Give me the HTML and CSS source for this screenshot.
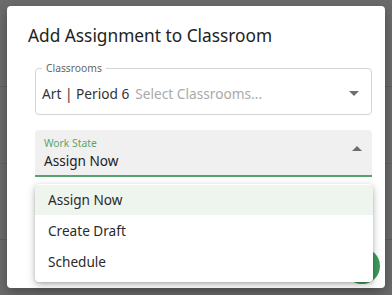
FILE: index.html
```html
<!DOCTYPE html>
<html lang="en">
<head>
    <meta charset="UTF-8">
    <meta name="viewport" content="width=device-width, initial-scale=1.0">
    <title>Add Assignment to Classroom</title>
    <link rel="stylesheet" href="styles.css">
</head>
<body>
    <div class="backdrop">
        <div class="dialog">
            <h1 class="dialog-title">Add Assignment to Classroom</h1>

            <div class="field outlined">
                <span class="outlined-label">Classrooms</span>
                <div class="field-row">
                    <span class="chip-text">Art | Period 6</span>
                    <span class="placeholder">Select Classrooms...</span>
                    <span class="arrow down"></span>
                </div>
            </div>

            <div class="field filled">
                <div class="field-col">
                    <span class="filled-label">Work State</span>
                    <span class="value">Assign Now</span>
                </div>
                <span class="arrow up"></span>
            </div>

            <div class="actions">
                <span class="fab"></span>
            </div>

            <ul class="menu">
                <li class="menu-item selected">Assign Now</li>
                <li class="menu-item">Create Draft</li>
                <li class="menu-item">Schedule</li>
            </ul>
        </div>
    </div>
</body>
</html>
```

FILE: styles.css
```css
body {
    margin: 0;
    font-family: "Noto Sans", "Open Sans", sans-serif;
    background-color: #6b6b6b;
    width: 392px;
    height: 295px;
    overflow: hidden;
}

.backdrop {
    height: 295px;
    padding: 6px 7px 0 7px;
    box-sizing: border-box;
    background:
        linear-gradient(#5e5e5e, #5e5e5e) 0 86px / 100% 1px no-repeat,
        linear-gradient(#626262, #626262) 0 163px / 100% 1px no-repeat,
        linear-gradient(#5e5e5e, #5e5e5e) 0 239px / 100% 1px no-repeat,
        #6b6b6b;
}

.dialog {
    position: relative;
    background: white;
    border-radius: 4px;
    height: 282px;
    padding: 0 13px 0 21px;
    box-sizing: border-box;
    box-shadow: 0 4px 12px rgba(0, 0, 0, 0.3);
}

.dialog-title {
    margin: 0;
    padding-top: 17px;
    font-size: 17.3px;
    font-weight: 400;
    line-height: 26px;
    color: #222;
}

.field {
    margin-left: 7px;
    width: 337px;
    box-sizing: border-box;
}

.outlined {
    position: relative;
    margin-top: 19px;
    height: 47px;
    border: 1px solid #d4d4d4;
    border-radius: 4px;
    padding: 0 0 0 6px;
}

.outlined-label {
    position: absolute;
    top: -9px;
    left: 6px;
    padding: 0 4px;
    background: white;
    font-size: 10.3px;
    line-height: 16px;
    color: #666;
}

.field-row {
    display: flex;
    align-items: center;
    height: 45px;
    font-size: 13.7px;
    padding-top: 2px;
}

.chip-text {
    color: #333;
}

.placeholder {
    color: #aaa;
    margin-left: 6px;
    flex: 1;
}

.arrow {
    width: 0;
    height: 0;
    border-left: 5px solid transparent;
    border-right: 5px solid transparent;
}

.arrow.down {
    border-top: 5px solid #6e6e6e;
    margin-right: 12px;
}

.arrow.up {
    border-bottom: 5px solid #6e6e6e;
    margin-right: 10px;
    margin-top: -8px;
}

.filled {
    margin-top: 15px;
    height: 47px;
    background: #f0f0f0;
    border-radius: 4px 4px 0 0;
    border-bottom: 2px solid #5b9f6c;
    display: flex;
    align-items: center;
    padding-left: 9px;
}

.field-col {
    flex: 1;
    display: flex;
    flex-direction: column;
    padding-top: 3px;
}

.filled-label {
    font-size: 10.3px;
    line-height: 13px;
    color: #5aa56e;
}

.value {
    font-size: 13.6px;
    line-height: 21px;
    color: #222;
}

.actions {
    display: flex;
    justify-content: flex-end;
    margin-top: 71px;
    margin-right: -8px;
}

.fab {
    width: 36px;
    height: 36px;
    border-radius: 50%;
    background: #3e9a5a;
}

.menu {
    position: absolute;
    left: 28px;
    top: 178px;
    width: 338px;
    margin: 0;
    padding: 1px 0 5px 0;
    list-style: none;
    background: white;
    border-radius: 4px;
    box-shadow: 0 3px 8px rgba(0, 0, 0, 0.25), 0 1px 3px rgba(0, 0, 0, 0.15);
}

.menu-item {
    height: 31px;
    line-height: 31px;
    padding-left: 13px;
    font-size: 13.6px;
    color: #2a2a2a;
}

.menu-item.selected {
    background: #eef5ef;
    height: 30px;
    line-height: 30px;
}
```
